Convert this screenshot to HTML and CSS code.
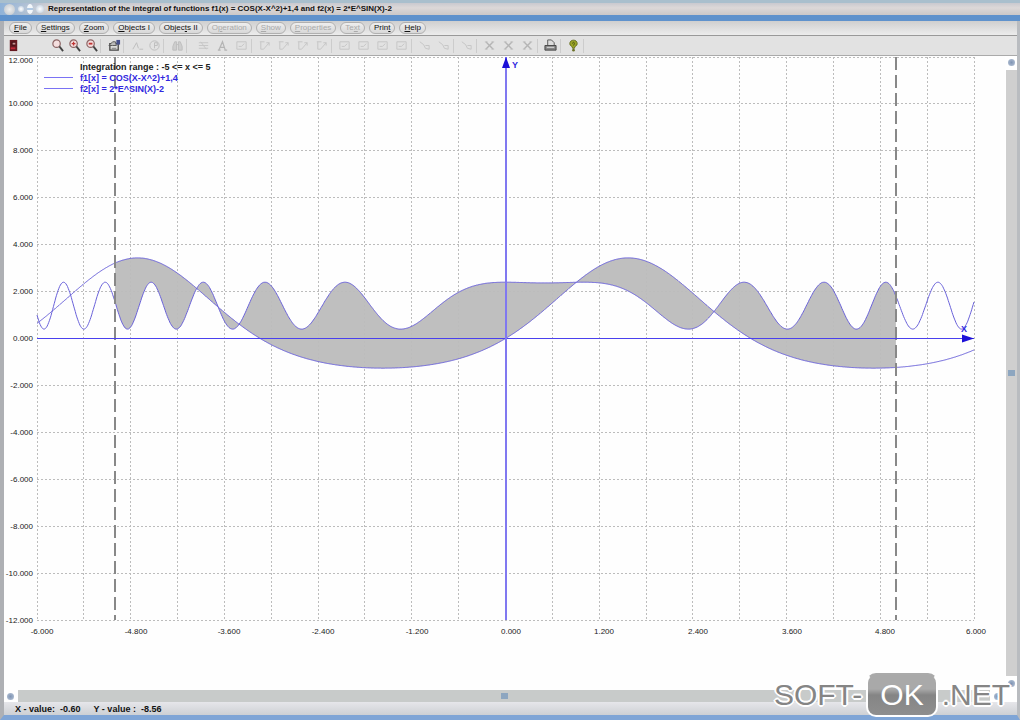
FILE: index.html
```html
<!DOCTYPE html>
<html lang="en">
<head>
  <meta charset="UTF-8">
  <meta name="viewport" content="width=device-width, initial-scale=1.0">
  <link rel="stylesheet" href="styles.css">
  <title>Representation of the integral of functions</title>
</head>
<body>
  <svg class="symbols" aria-hidden="true">
    <symbol id="door" viewBox="0 0 14 14"><rect x="3" y="1" width="8" height="12" fill="#651820"/><rect x="5" y="3" width="4" height="4" fill="#3c0810"/><path d="M6 4h3v2H6z" fill="#c89090"/><path d="M4 10h5" stroke="#c02838" stroke-width="2"/></symbol>
    <symbol id="zoom" viewBox="0 0 14 14"><circle cx="6" cy="5" r="4" fill="#f4dede" stroke="#8c6464" stroke-width="1.3"/><path d="M9 8l4 5" stroke="#444" stroke-width="2"/></symbol>
    <symbol id="plus" viewBox="0 0 14 14"><circle cx="6" cy="5" r="4" fill="#f4dede" stroke="#8c6464" stroke-width="1.3"/><path d="M9 8l4 5" stroke="#444" stroke-width="2"/><path d="M4 5h4M6 3v4" stroke="#c03434" stroke-width="1.4"/></symbol>
    <symbol id="minus" viewBox="0 0 14 14"><circle cx="6" cy="5" r="4" fill="#f4dede" stroke="#8c6464" stroke-width="1.3"/><path d="M9 8l4 5" stroke="#444" stroke-width="2"/><path d="M4 5h4" stroke="#c03434" stroke-width="2"/></symbol>
    <symbol id="props" viewBox="0 0 14 14"><path d="M2 5h9v7H2z" fill="#ddd" stroke="#444" stroke-width="1.4"/><path d="M1 7l4-4h3l1 4H5z" fill="#bbb" stroke="#555"/><path d="M9 1h4v5H9z" fill="#46508c"/><path d="M4 10h5" stroke="#777"/></symbol>
    <symbol id="slope" viewBox="0 0 14 14"><path d="M2 11l4-7 2 6M9 11h4" fill="none" stroke="#999"/></symbol>
    <symbol id="clock" viewBox="0 0 14 14"><circle cx="7" cy="7" r="5" fill="none" stroke="#999"/><path d="M7 10V4h3v3H7" fill="none" stroke="#999"/></symbol>
    <symbol id="find" viewBox="0 0 14 14"><path d="M2 12V8l2-5h2v9zM8 12V3h2l2 5v4zM6 6h2" fill="#bbb" stroke="#999"/></symbol>
    <symbol id="grid" viewBox="0 0 14 14"><path d="M2 4h10M2 7h10M2 10h10M4 3l6 8" fill="none" stroke="#aaa"/></symbol>
    <symbol id="letter" viewBox="0 0 14 14"><path d="M3 12L7 3l3 9M5 9h4M2 12h3M9 12h3" fill="none" stroke="#888" stroke-width="1.3"/></symbol>
    <symbol id="box" viewBox="0 0 14 14"><path d="M2 3h10v8H2zM4 8h3l3-3" fill="none" stroke="#aaa"/></symbol>
    <symbol id="edit" viewBox="0 0 14 14"><path d="M2 3h5M3 3v8h3l6-7M9 4h3v3" fill="none" stroke="#aaa"/></symbol>
    <symbol id="curve" viewBox="0 0 14 14"><path d="M2 3l4 3 2 4 4 1M8 7h4v4" fill="none" stroke="#aaa"/></symbol>
    <symbol id="cross" viewBox="0 0 14 14"><path d="M3 3l8 8M11 3l-8 8" stroke="#888" stroke-width="1.5"/><path d="M2 3h3M9 3h3M2 11h3M9 11h3" stroke="#aaa"/></symbol>
    <symbol id="printer" viewBox="0 0 14 14"><path d="M4 7V1h4l3 3v3" fill="#ddd" stroke="#555"/><path d="M1 7h12v5H1z" fill="#888" stroke="#444"/><path d="M3 9h8" stroke="#ddd"/></symbol>
    <symbol id="question" viewBox="0 0 14 14"><path d="M3 5c0-5 8-5 8 0 0 3-3 2-3 5H6c0-3-3-2-3-5z" fill="#9ba526" stroke="#656c20"/><circle cx="7" cy="12" r="1.4" fill="#6b7028"/><path d="M6 5c0-2 2-2 2 0L7 7" fill="none" stroke="#4c5218"/></symbol>
  </svg>

  <div class="window">
    <header class="titlebar">
      <span class="orb big"></span><span class="orb"></span><span class="orb pair"></span><span class="orb mid"></span>
      <h1>Representation of the integral of functions f1(x) = COS(X-X^2)+1,4 and f2(x) = 2*E^SIN(X)-2</h1>
    </header>

    <nav class="menu">
      <button><u>F</u>ile</button>
      <button><u>S</u>ettings</button>
      <button><u>Z</u>oom</button>
      <button><u>O</u>bjects I</button>
      <button>Objec<u>t</u>s II</button>
      <button disabled>O<u>p</u>eration</button>
      <button disabled><u>S</u>how</button>
      <button disabled><u>P</u>roperties</button>
      <button disabled>Te<u>x</u>t</button>
      <button>Prin<u>t</u></button>
      <button><u>H</u>elp</button>
    </nav>

    <div class="toolbar">
      <div class="section view">
        <div class="group exit"><button aria-label="Exit"><svg><use href="#door"/></svg></button></div>
        <div class="group"><button aria-label="Zoom"><svg><use href="#zoom"/></svg></button><button aria-label="Zoom in"><svg><use href="#plus"/></svg></button><button aria-label="Zoom out"><svg><use href="#minus"/></svg></button></div>
        <div class="group"><button aria-label="Settings"><svg><use href="#props"/></svg></button></div>
        <div class="group"><button disabled aria-label="Slope"><svg><use href="#slope"/></svg></button><button disabled aria-label="Point"><svg><use href="#clock"/></svg></button></div>
        <div class="group"><button disabled aria-label="Find"><svg><use href="#find"/></svg></button></div>
      </div>
      <div class="section edit">
        <div class="group"><button disabled aria-label="Grid"><svg><use href="#grid"/></svg></button><button disabled aria-label="Text"><svg><use href="#letter"/></svg></button><button disabled aria-label="Frame"><svg><use href="#box"/></svg></button></div>
        <div class="group"><button disabled aria-label="Edit 1"><svg><use href="#edit"/></svg></button><button disabled aria-label="Edit 2"><svg><use href="#edit"/></svg></button><button disabled aria-label="Edit 3"><svg><use href="#edit"/></svg></button><button disabled aria-label="Edit 4"><svg><use href="#edit"/></svg></button></div>
        <div class="group"><button disabled aria-label="Show 1"><svg><use href="#box"/></svg></button><button disabled aria-label="Show 2"><svg><use href="#box"/></svg></button><button disabled aria-label="Show 3"><svg><use href="#box"/></svg></button><button disabled aria-label="Show 4"><svg><use href="#box"/></svg></button></div>
        <div class="group"><button disabled aria-label="Curve 1"><svg><use href="#curve"/></svg></button><button disabled aria-label="Curve 2"><svg><use href="#curve"/></svg></button></div>
        <div class="group"><button disabled aria-label="Curve 3"><svg><use href="#curve"/></svg></button></div>
        <div class="group"><button disabled aria-label="Delete 1"><svg><use href="#cross"/></svg></button><button disabled aria-label="Delete 2"><svg><use href="#cross"/></svg></button><button disabled aria-label="Delete 3"><svg><use href="#cross"/></svg></button></div>
        <div class="group"><button aria-label="Print"><svg><use href="#printer"/></svg></button></div>
        <div class="group"><button aria-label="Help"><svg><use href="#question"/></svg></button></div>
      </div>
    </div>

    <main class="workspace">
      <svg id="plot" class="plot"></svg>
      <div class="scroll vertical">
        <button aria-label="Scroll up"></button>
        <div class="track"><span class="mark"></span></div>
        <button aria-label="Scroll down"></button>
      </div>
    </main>

    <div class="scroll horizontal">
      <button aria-label="Scroll left"></button>
      <div class="track"><span class="mark"></span></div>
      <button aria-label="Scroll right"></button>
    </div>

    <footer class="status">
      <span>X - value:&nbsp; -0.60</span>
      <span>Y - value :&nbsp; -8.56</span>
    </footer>
  </div>

  <div class="watermark"><span>SOFT-</span><span class="badge">OK</span><span>.NET</span></div>

  <script src="plot.js"></script>
</body>
</html>
```
FILE: styles.css
```css
* {
  box-sizing: border-box;
}

body {
  margin: 0;
  font-family: "Liberation Sans", Arial, sans-serif;
  font-size: 8px;
  color: #111;
  position: relative;
}

button {
  font: inherit;
  color: inherit;
  padding: 0;
  border: none;
  background: none;
}

.symbols {
  display: none;
}

.window {
  display: flex;
  flex-direction: column;
  height: 100vh;
  border-left: 4px solid #aeb0b4;
  border-right: 3px solid #b9bcc0;
  border-bottom: 5px solid #7fa5d6;
  background-color: #fff;
}

/* title */
.titlebar {
  display: flex;
  align-items: center;
  gap: 3px;
  height: 21px;
  margin: 0 -3px 0 -4px;
  padding: 0 4px 0 4px;
  border-top: 3px solid #a9bfcd;
  border-bottom: 6px solid #5f92cc;
  background: linear-gradient(90deg, #8fb2d8, rgba(143, 178, 216, 0) 50px), linear-gradient(#c9c9cf, #dcd8d8 40%, #cbc8c8);
}

.titlebar h1 {
  margin: 0 0 0 1px;
  font-size: 8px;
  line-height: 10px;
  white-space: nowrap;
}

.orb {
  width: 6px;
  height: 6px;
  border-radius: 50%;
  background: radial-gradient(#fff, #b8c8da);
}

.orb.big {
  width: 11px;
  height: 11px;
  background: radial-gradient(#eee, #bcc3ca);
}

.orb.pair {
  height: 10px;
  background: linear-gradient(#f3f7fb 40%, #6f9ccc 50%, #f3f7fb 60%);
}

.orb.mid {
  width: 8px;
  height: 8px;
}

/* menu */
.menu {
  display: flex;
  align-items: center;
  gap: 4px;
  height: 15px;
  padding-left: 5px;
  border-bottom: 1px solid #999;
  background: linear-gradient(#cfcfcf, #ececec);
}

.menu button {
  height: 12px;
  padding: 0 4px;
  border: 1px solid #b0b0b0;
  border-radius: 6px;
  background: linear-gradient(#eee, #d8d8d8);
  line-height: 10px;
  white-space: nowrap;
}

.menu button:disabled {
  color: #aaa;
}

/* toolbar */
.toolbar {
  display: flex;
  gap: 8px;
  height: 20px;
  padding-left: 1px;
  border-bottom: 1px solid #aaa;
  background-color: #e2e2e2;
}

.section,
.group {
  display: flex;
  align-items: center;
}

.view {
  gap: 6px;
}

.edit {
  gap: 4px;
}

.group {
  height: 16px;
  box-shadow: 2px 0 0 -1px #ccc;
}

.exit {
  margin-right: 21px;
  box-shadow: none;
}

.toolbar button {
  display: flex;
  justify-content: center;
  width: 17px;
}

.edit button {
  width: 19px;
}

.toolbar svg {
  width: 13px;
  height: 13px;
}

.toolbar button:disabled {
  opacity: 0.5;
}

/* drawing area */
.workspace {
  display: flex;
  flex: 1;
  min-height: 0;
}

.plot {
  flex: 1;
  min-width: 0;
  height: 100%;
  background-color: #fefefe;
}

.plot text {
  fill: #222;
}

.plot .label-y {
  text-anchor: end;
}

.plot .label-x {
  text-anchor: middle;
}

.plot .grid {
  stroke: #bcbcbc;
  stroke-dasharray: 2 2;
}

.plot .area {
  fill: #bfbfbf;
}

.plot .curve {
  fill: none;
  stroke: #6a62da;
}

.plot .limit {
  stroke: #888;
  stroke-width: 2;
  stroke-dasharray: 13 5;
}

.plot .axis-x {
  stroke: #4a40ee;
}

.plot .axis-y {
  stroke: #8078f0;
  stroke-width: 2;
}

.plot .arrow {
  fill: #1c10d8;
}

.plot .key {
  stroke: #7a72f4;
}

.plot .legend {
  font-size: 9px;
  font-weight: bold;
}

.plot .blue {
  font-size: 9px;
  font-weight: bold;
  fill: #3026e0;
}

/* scrollbars */
.scroll {
  display: flex;
  align-items: center;
  gap: 4px;
}

.scroll button {
  width: 7px;
  height: 7px;
  border-radius: 50%;
  background: radial-gradient(#7f94b4, #b9c6d8);
}

.scroll .track {
  display: flex;
  flex: 1;
  align-items: center;
  justify-content: center;
  background-color: #cfcfcf;
}

.scroll .mark {
  width: 7px;
  height: 6px;
  background-color: #8da6c0;
}

.vertical {
  flex-direction: column;
  width: 12px;
  padding: 3px 0;
}

.vertical .track {
  width: 11px;
}

.horizontal {
  height: 12px;
  padding: 0 16px 0 3px;
}

.horizontal .track {
  height: 12px;
  background-color: #c8cbca;
}

.status {
  display: flex;
  align-items: center;
  gap: 13px;
  height: 13px;
  padding-left: 11px;
  background: linear-gradient(#e6e6ea, #cdd0d4);
  font-size: 9px;
  font-weight: bold;
  white-space: nowrap;
}

.watermark {
  position: absolute;
  right: 10px;
  bottom: 3px;
  display: flex;
  align-items: center;
  gap: 4px;
  font-size: 30px;
  line-height: 40px;
  color: #858585;
  text-shadow: 2px 0 #fff, -2px 0 #fff, 0 2px #fff, 0 -2px #fff, 1px 1px #fff, -1px -1px #fff, 1px -1px #fff, -1px 1px #fff;
}

.badge {
  padding: 0 12px;
  border: 2px solid #fff;
  border-top-color: #aaa;
  border-radius: 10px;
  background: linear-gradient(#a9a9a9 35%, #858585 50%, #8e8e8e);
  color: #fff;
  text-shadow: none;
}
```
FILE: plot.js
```js
var svg = document.getElementById('plot');

function f1(x) {
  return Math.cos(x - x * x) + 1.4;
}

function f2(x) {
  return 2 * Math.exp(Math.sin(x)) - 2;
}

function add(name, attrs, text) {
  var el = document.createElementNS('http://www.w3.org/2000/svg', name);
  for (var key in attrs) {
    el.setAttribute(key, attrs[key]);
  }
  if (text) el.textContent = text;
  svg.appendChild(el);
}

function line(x1, y1, x2, y2, cls) {
  add('line', { x1: x1, y1: y1, x2: x2, y2: y2, class: cls });
}

function draw() {
  svg.innerHTML = '';
  var left = 33, top = 1;
  var right = svg.clientWidth - 31;
  var bottom = svg.clientHeight - 70;

  function px(x) { return left + (x + 6) / 12 * (right - left); }
  function py(y) { return top + (12 - y) / 24 * (bottom - top); }
  function snap(v) { return Math.floor(v) + 0.5; }

  function points(f, from, to) {
    var list = [];
    for (var i = 0; i <= 1200; i++) {
      var x = from + (to - from) * i / 1200;
      list.push(px(x).toFixed(1) + ',' + py(f(x)).toFixed(1));
    }
    return list;
  }

  // area between the two functions
  var area = points(f1, -5, 5).concat(points(f2, -5, 5).reverse());
  add('polygon', { points: area.join(' '), class: 'area' });

  // grid and labels
  for (var i = 0; i <= 20; i++) {
    var x = -6 + i * 0.6;
    line(snap(px(x)), top, snap(px(x)), bottom, 'grid');
    if (i % 2 === 0) {
      var shift = i === 20 ? 2 : 5;
      add('text', { x: Math.round(px(x)) + shift, y: bottom + 14, class: 'label-x' }, (i === 10 ? 0 : x).toFixed(3));
    }
  }
  for (var y = -12; y <= 12; y += 2) {
    if (y !== 0) line(left, snap(py(y)), right, snap(py(y)), 'grid');
    add('text', { x: left - 4, y: Math.floor(py(y)) + (y === 12 ? 6 : 3), class: 'label-y' }, y.toFixed(3));
  }

  // curves
  add('polyline', { points: points(f1, -6, 6).join(' '), class: 'curve' });
  add('polyline', { points: points(f2, -6, 6).join(' '), class: 'curve' });

  // integration limits
  line(Math.round(px(-5)), top, Math.round(px(-5)), bottom, 'limit');
  line(Math.round(px(5)), top, Math.round(px(5)), bottom, 'limit');

  // axes
  var x0 = Math.round(px(0)), y0 = snap(py(0));
  line(left, y0, right, y0, 'axis-x');
  line(x0, top, x0, bottom, 'axis-y');
  add('polygon', { points: [x0, top, x0 - 4, top + 11, x0 + 4, top + 11].join(' '), class: 'arrow' });
  add('polygon', { points: [right, y0, right - 12, y0 - 4, right - 12, y0 + 4].join(' '), class: 'arrow' });
  add('text', { x: x0 + 6, y: top + 11, class: 'blue' }, 'Y');
  add('text', { x: right - 13, y: y0 - 7, class: 'blue' }, 'X');

  // legend
  add('text', { x: 76, y: 14, class: 'legend' }, 'Integration range : -5 <= x <= 5');
  line(40, 21.5, 69, 21.5, 'key');
  add('text', { x: 76, y: 25, class: 'blue' }, 'f1[x] = COS(X-X^2)+1,4');
  line(40, 32.5, 69, 32.5, 'key');
  add('text', { x: 76, y: 36, class: 'blue' }, 'f2[x] = 2*E^SIN(X)-2');
}

draw();
window.addEventListener('resize', draw);
```
